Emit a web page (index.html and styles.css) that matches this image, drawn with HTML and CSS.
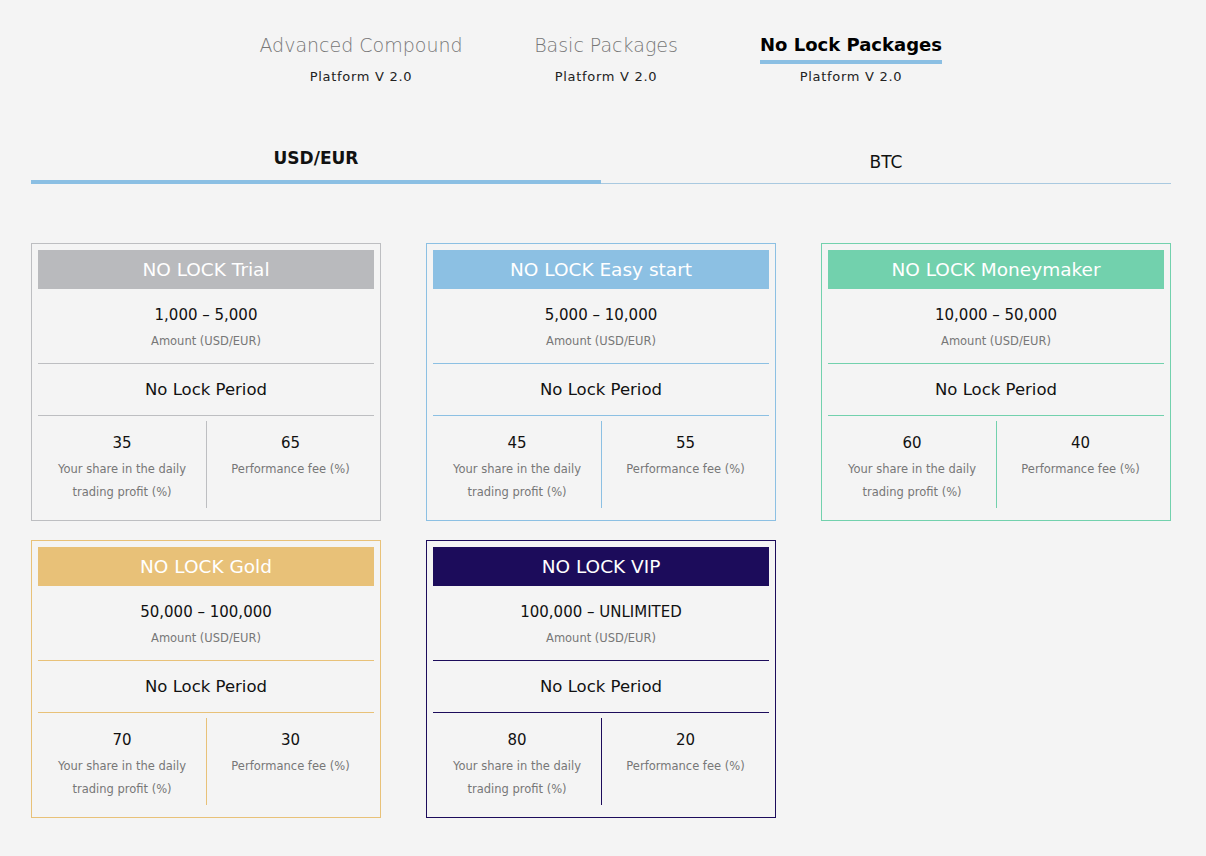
FILE: index.html
```html
<!DOCTYPE html>
<html lang="en">

<head>
  <meta charset="UTF-8">
  <meta name="viewport" content="width=device-width, initial-scale=1.0">
  <title>No Lock Packages</title>
  <link rel="stylesheet" href="styles.css">
</head>

<body>
  <!-- верхние вкладки -->
  <div class="nav">
    <div class="nav__item">
      <div class="nav__title">Advanced Compound</div>
      <div class="nav__sub">Platform V 2.0</div>
    </div>
    <div class="nav__item">
      <div class="nav__title">Basic Packages</div>
      <div class="nav__sub">Platform V 2.0</div>
    </div>
    <div class="nav__item nav__item_active">
      <div class="nav__title">No Lock Packages</div>
      <div class="nav__sub">Platform V 2.0</div>
    </div>
  </div>

  <!-- валюта -->
  <div class="currency">
    <div class="currency__tab currency__tab_active">USD/EUR</div>
    <div class="currency__tab">BTC</div>
  </div>

  <!-- пакеты -->
  <div class="cards">
    <div class="card card_trial">
      <div class="card__head">NO LOCK Trial</div>
      <div class="card__amount">
        <div class="card__value">1,000 – 5,000</div>
        <div class="card__label">Amount (USD/EUR)</div>
      </div>
      <div class="card__period">No Lock Period</div>
      <div class="card__bottom">
        <div class="card__col">
          <div class="card__num">35</div>
          <div class="card__label">Your share in the daily trading profit (%)</div>
        </div>
        <div class="card__col">
          <div class="card__num">65</div>
          <div class="card__label">Performance fee (%)</div>
        </div>
      </div>
    </div>

    <div class="card card_easy">
      <div class="card__head">NO LOCK Easy start</div>
      <div class="card__amount">
        <div class="card__value">5,000 – 10,000</div>
        <div class="card__label">Amount (USD/EUR)</div>
      </div>
      <div class="card__period">No Lock Period</div>
      <div class="card__bottom">
        <div class="card__col">
          <div class="card__num">45</div>
          <div class="card__label">Your share in the daily trading profit (%)</div>
        </div>
        <div class="card__col">
          <div class="card__num">55</div>
          <div class="card__label">Performance fee (%)</div>
        </div>
      </div>
    </div>

    <div class="card card_money">
      <div class="card__head">NO LOCK Moneymaker</div>
      <div class="card__amount">
        <div class="card__value">10,000 – 50,000</div>
        <div class="card__label">Amount (USD/EUR)</div>
      </div>
      <div class="card__period">No Lock Period</div>
      <div class="card__bottom">
        <div class="card__col">
          <div class="card__num">60</div>
          <div class="card__label">Your share in the daily trading profit (%)</div>
        </div>
        <div class="card__col">
          <div class="card__num">40</div>
          <div class="card__label">Performance fee (%)</div>
        </div>
      </div>
    </div>

    <div class="card card_gold">
      <div class="card__head">NO LOCK Gold</div>
      <div class="card__amount">
        <div class="card__value">50,000 – 100,000</div>
        <div class="card__label">Amount (USD/EUR)</div>
      </div>
      <div class="card__period">No Lock Period</div>
      <div class="card__bottom">
        <div class="card__col">
          <div class="card__num">70</div>
          <div class="card__label">Your share in the daily trading profit (%)</div>
        </div>
        <div class="card__col">
          <div class="card__num">30</div>
          <div class="card__label">Performance fee (%)</div>
        </div>
      </div>
    </div>

    <div class="card card_vip">
      <div class="card__head">NO LOCK VIP</div>
      <div class="card__amount">
        <div class="card__value">100,000 – UNLIMITED</div>
        <div class="card__label">Amount (USD/EUR)</div>
      </div>
      <div class="card__period">No Lock Period</div>
      <div class="card__bottom">
        <div class="card__col">
          <div class="card__num">80</div>
          <div class="card__label">Your share in the daily trading profit (%)</div>
        </div>
        <div class="card__col">
          <div class="card__num">20</div>
          <div class="card__label">Performance fee (%)</div>
        </div>
      </div>
    </div>
  </div>
</body>

</html>
```

FILE: styles.css
```css
* {
  box-sizing: border-box
}

body {
  margin: 0;
  min-height: 856px;
  background-color: #f4f4f4;
  font-family: "DejaVu Sans", sans-serif;
  color: #111
}

/* верхние вкладки */
.nav {
  display: grid;
  grid-template-columns: repeat(3, 245px);
  justify-content: center;
  padding: 32px 0 0 6px
}

.nav__item {
  display: flex;
  flex-direction: column;
  align-items: center
}

.nav__title {
  font-size: 19px;
  line-height: 26px;
  color: #777;
  font-weight: 300;
  padding-bottom: 2px;
  border-bottom: 4px solid transparent
}

.nav__item_active .nav__title {
  color: #000;
  font-weight: 700;
  font-size: 18px;
  border-bottom-color: #8bbfe3
}

.nav__sub {
  margin-top: 5px;
  font-size: 13px;
  letter-spacing: .7px;
  color: #222
}

/* валюта */
.currency {
  display: flex;
  margin: 53px 35px 0 31px;
  border-bottom: 1px solid #a9c9e0
}

.currency__tab {
  flex: 1;
  text-align: center;
  font-size: 17px;
  padding: 14px 0 10px;
  line-height: 22px
}

.currency__tab_active {
  font-weight: 700;
  padding: 10px 0 10px;
  border-bottom: 4px solid #8bbfe3;
  margin-bottom: -1px
}

/* карточки */
.cards {
  display: grid;
  grid-template-columns: repeat(3, 350px);
  column-gap: 45px;
  row-gap: 19px;
  margin: 59px 0 0 31px
}

.card {
  --c: #c2c2c4;
  border: 1px solid var(--c);
  padding: 6px 6px 12px;
  text-align: center
}

.card__head {
  height: 39px;
  line-height: 39px;
  background-color: var(--c);
  color: #fff;
  font-size: 18.5px
}

.card__amount {
  height: 75px;
  padding-top: 15px;
  border-bottom: 1px solid var(--c)
}

.card__value {
  font-size: 15px;
  line-height: 22px
}

.card__label {
  font-size: 11.5px;
  line-height: 23px;
  color: #777;
  padding-top: 4px
}

.card__period {
  height: 52px;
  padding-top: 2px;
  line-height: 48px;
  font-size: 16.5px;
  border-bottom: 1px solid var(--c)
}

.card__bottom {
  display: grid;
  grid-template-columns: 1fr 1fr;
  padding-top: 5px
}

.card__col {
  height: 87px;
  padding: 11px 14px 0
}

.card__col + .card__col {
  border-left: 1px solid var(--c)
}

.card__num {
  font-size: 15px;
  line-height: 22px
}

.card_trial {
  --c: #bdbec1
}

.card_trial .card__head {
  background-color: #b9babd
}

.card_easy {
  --c: #8cc0e3
}

.card_money {
  --c: #72d1ad
}

.card_gold {
  --c: #e8c178
}

.card_vip {
  --c: #1c0c5b
}
```
